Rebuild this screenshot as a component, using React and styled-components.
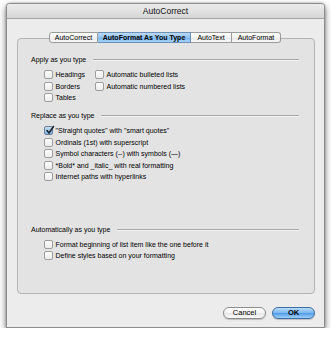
import React from "react";
import styled, { createGlobalStyle } from "styled-components";

const Global = createGlobalStyle`
  html, body { margin: 0; padding: 0; background: #ffffff; }
  body { font-family: "Liberation Sans", Arial, sans-serif; color: #000; }
`;

const Window = styled.div`
  margin: 3px 0 0 6px;
  width: 319px;
  height: 325px;
  box-sizing: border-box;
  border: 1px solid #8c8c8c;
  border-radius: 4px 4px 0 0;
  background: #ececec;
  box-shadow: 0 3px 7px rgba(0,0,0,0.55), 0 0 2px rgba(0,0,0,0.3);
  display: flex;
  flex-direction: column;
`;

const TitleBar = styled.div`
  height: 14px;
  flex: none;
  border-bottom: 1px solid #a4a4a4;
  border-radius: 3px 3px 0 0;
  background: linear-gradient(#ececec, #d6d6d6);
  display: flex;
  align-items: center;
  justify-content: center;
  font-size: 8.5px;
  color: #111;
`;

const Body = styled.div`
  flex: 1;
  display: flex;
  flex-direction: column;
  padding: 0 9px 0 10px;
`;

const TabBar = styled.div`
  margin-top: 13px;
  display: flex;
  justify-content: center;
  position: relative;
  z-index: 1;
  padding-right: 2px;
`;

const Tab = styled.div`
  height: 10.5px;
  box-sizing: border-box;
  border: 1px solid ${p => (p.$active ? "#6a8fb8" : "#9a9a9a")};
  border-left-width: ${p => (p.$first ? "1px" : "0")};
  border-radius: ${p => (p.$first ? "3px 0 0 3px" : p.$last ? "0 3px 3px 0" : "0")};
  background: ${p =>
    p.$active
      ? "linear-gradient(#bfdcf7, #8ec0ef 50%, #74b2ee 51%, #a9d4fb)"
      : "linear-gradient(#ffffff, #f2f2f2 50%, #e8e8e8 51%, #f8f8f8)"};
  width: ${p => p.$w}px;
  display: flex;
  align-items: center;
  justify-content: center;
  font-size: 7px;
  color: #000;
  font-weight: ${p => (p.$active ? 600 : 400)};
`;

const Group = styled.div`
  margin-top: -5px;
  height: 256px;
  box-sizing: border-box;
  border: 1px solid #b4b4b4;
  border-radius: 4px;
  background: #e3e3e3;
  padding: 16px 15px 0 13px;
  display: flex;
  flex-direction: column;
`;

const Heading = styled.div`
  height: 10px;
  display: flex;
  align-items: center;
  gap: 7px;
  font-size: 7px;
  margin-top: ${p => p.$mt || 0}px;
  &::after {
    content: "";
    flex: 1;
    height: 1px;
    background: #a8a8a8;
    box-shadow: 0 1px 0 #f4f4f4;
  }
`;

const Rows = styled.div`
  margin-top: 4.25px;
  padding-left: 13px;
  display: grid;
  grid-template-columns: ${p => (p.$cols === 2 ? "51px auto" : "auto")};
  grid-auto-flow: ${p => (p.$cols === 2 ? "column" : "row")};
  grid-template-rows: ${p => (p.$cols === 2 ? "repeat(3, 11.5px)" : "none")};
  grid-auto-rows: 11.5px;
  justify-content: start;
`;

const Row = styled.label`
  display: flex;
  align-items: center;
  gap: 2.5px;
  font-size: 7px;
  color: #000;
  white-space: nowrap;
`;

const Box = styled.span`
  width: 9px;
  height: 9px;
  box-sizing: border-box;
  flex: none;
  border: 1px solid ${p => (p.$checked ? "#6b7f99" : "#9d9d9d")};
  border-radius: 2px;
  background: ${p =>
    p.$checked
      ? "linear-gradient(#c9e0f6, #7fb3e6)"
      : "linear-gradient(#fdfdfd, #ececec)"};
  position: relative;
  & svg { position: absolute; left: 0; top: -2px; }
`;

const ButtonRow = styled.div`
  margin-top: 13px;
  display: flex;
  justify-content: flex-end;
  gap: 6px;
`;

const Button = styled.div`
  width: ${p => p.$w}px;
  height: 12.5px;
  box-sizing: border-box;
  border-radius: 7px;
  border: 1px solid ${p => (p.$primary ? "#3b6ea8" : "#8c8c8c")};
  background: ${p =>
    p.$primary
      ? "linear-gradient(#b9dcfa, #78b6ee 50%, #4f9ae6 51%, #9fd0fb)"
      : "linear-gradient(#ffffff, #f3f3f3 50%, #e6e6e6 51%, #fbfbfb)"};
  box-shadow: 0 1px 1px rgba(0,0,0,0.2);
  display: flex;
  align-items: center;
  justify-content: center;
  font-size: 7.5px;
  color: #000;
  font-weight: ${p => (p.$primary ? 600 : 400)};
`;

const Check = ({ checked, children }) => (
  <Row>
    <Box $checked={checked}>
      {checked && (
        <svg width="10" height="10" viewBox="0 0 10 10">
          <path d="M2 5.5 L4 8 L8.5 1.5" fill="none" stroke="#1a2430" strokeWidth="1.6" strokeLinecap="round" strokeLinejoin="round" />
        </svg>
      )}
    </Box>
    {children}
  </Row>
);

export default function App() {
  return (
    <>
      <Global />
      <Window>
        <TitleBar>AutoCorrect</TitleBar>
        <Body>
          <TabBar>
            <Tab $first $w={49}>AutoCorrect</Tab>
            <Tab $active $w={93}>AutoFormat As You Type</Tab>
            <Tab $w={41}>AutoText</Tab>
            <Tab $last $w={49}>AutoFormat</Tab>
          </TabBar>
          <Group>
            <Heading>Apply as you type</Heading>
            <Rows $cols={2}>
              <Check>Headings</Check>
              <Check>Borders</Check>
              <Check>Tables</Check>
              <Check>Automatic bulleted lists</Check>
              <Check>Automatic numbered lists</Check>
            </Rows>
            <Heading $mt={7.25}>Replace as you type</Heading>
            <Rows>
              <Check checked>"Straight quotes" with "smart quotes"</Check>
              <Check>Ordinals (1st) with superscript</Check>
              <Check>Symbol characters (--) with symbols (—)</Check>
              <Check>*Bold* and _italic_ with real formatting</Check>
              <Check>Internet paths with hyperlinks</Check>
            </Rows>
            <Heading $mt={42}>Automatically as you type</Heading>
            <Rows>
              <Check>Format beginning of list item like the one before it</Check>
              <Check>Define styles based on your formatting</Check>
            </Rows>
          </Group>
          <ButtonRow>
            <Button $w={43}>Cancel</Button>
            <Button $primary $w={43}>OK</Button>
          </ButtonRow>
        </Body>
      </Window>
    </>
  );
}
